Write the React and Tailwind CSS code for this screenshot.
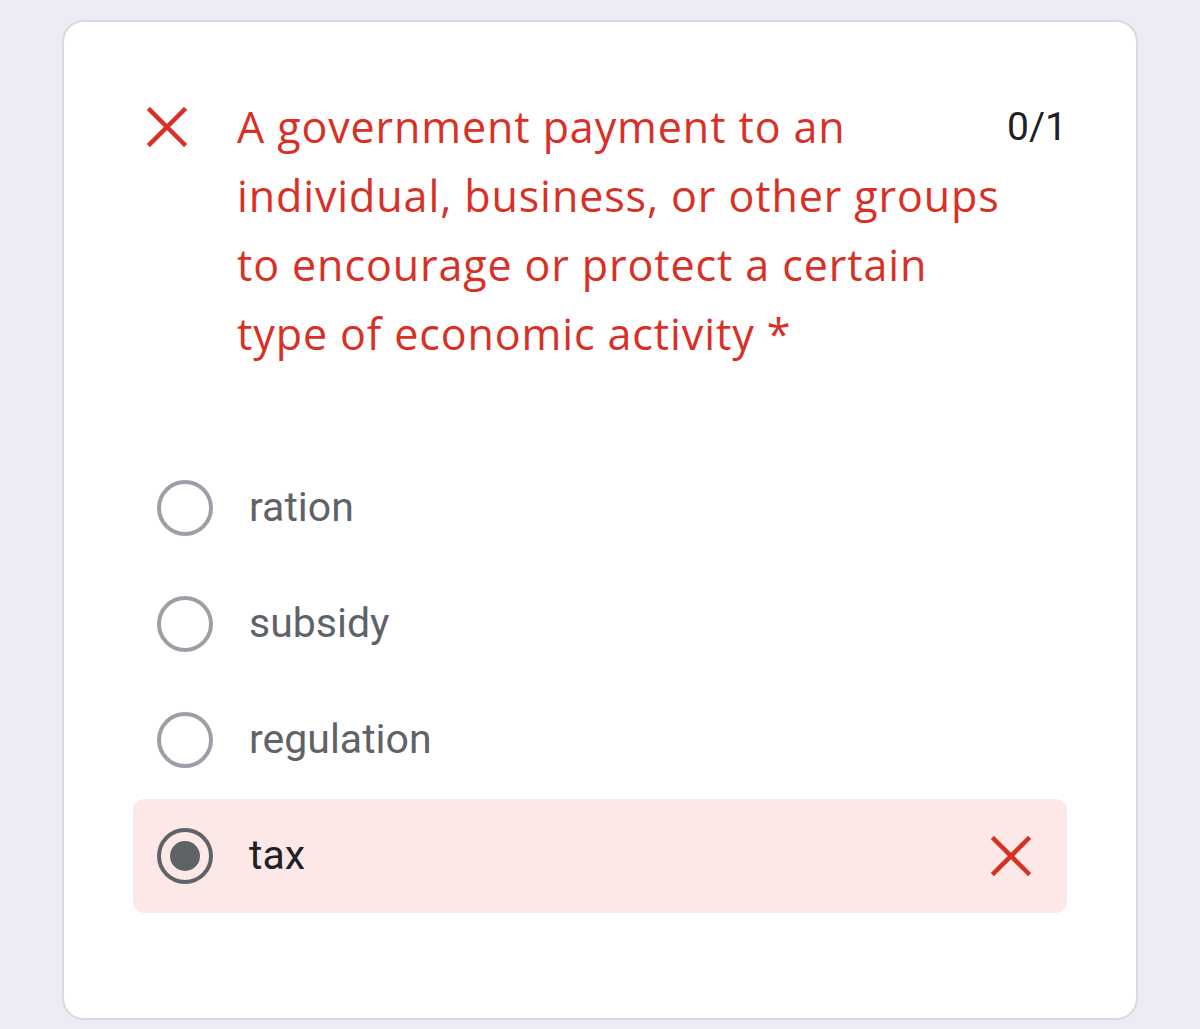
import React from "react";

function XIcon({ className }) {
  return (
    <svg viewBox="0 0 40 40" className={className} fill="none">
      <path d="M3 3 L37 37 M37 3 L3 37" stroke="#d93025" strokeWidth="4.5" strokeLinecap="square" />
    </svg>
  );
}

function Radio({ checked }) {
  return (
    <div className="w-[56px] h-[56px] rounded-full border-[4.5px] border-[#9aa0a6] flex items-center justify-center shrink-0 data-[c=true]:border-[#5f6368]" data-c={checked ? "true" : "false"}>
      {checked && <div className="w-[30px] h-[30px] rounded-full bg-[#5f6368]" />}
    </div>
  );
}

const options = ["ration", "subsidy", "regulation"];

export default function App() {
  return (
    <div className="w-[1200px] h-[1029px] bg-[#ececf6] pt-[20px] pl-[62px]">
      <div className="w-[1076px] h-[1000px] bg-white rounded-[22px] border-2 border-[#d9d9e0] px-[69px] pt-[70px]">
        <div className="flex items-start">
          <div className="w-[104px] pl-[14px] h-[70px] flex items-center shrink-0">
            <XIcon className="w-[40px] h-[40px]" />
          </div>
          <div
            className="flex-1 text-[43px] leading-[69px] tracking-[0.9px] text-[#d93025] whitespace-nowrap"
            style={{ fontFamily: "'Open Sans', sans-serif" }}
          >
            A government payment to an
            <br />
            individual, business, or other groups
            <br />
            to encourage or protect a certain
            <br />
            type of economic activity *
          </div>
          <div
            className="h-[70px] flex items-center text-[39px] text-[#202124]"
            style={{ fontFamily: "Roboto, sans-serif" }}
          >
            0/1
          </div>
        </div>
        <div className="mt-[82px] flex flex-col" style={{ fontFamily: "Roboto, sans-serif" }}>
          {options.map((o) => (
            <div key={o} className="h-[116px] flex items-center pl-[24px]">
              <Radio checked={false} />
              <span className="ml-[36px] text-[41px] text-[#5f6368]">{o}</span>
            </div>
          ))}
          <div className="h-[114px] mt-[1px] flex items-center pl-[24px] pr-[36px] bg-[#fce8e6] rounded-[12px]">
            <Radio checked={true} />
            <span className="ml-[36px] text-[41px] text-[#202124] flex-1">tax</span>
            <XIcon className="w-[40px] h-[40px]" />
          </div>
        </div>
      </div>
    </div>
  );
}
